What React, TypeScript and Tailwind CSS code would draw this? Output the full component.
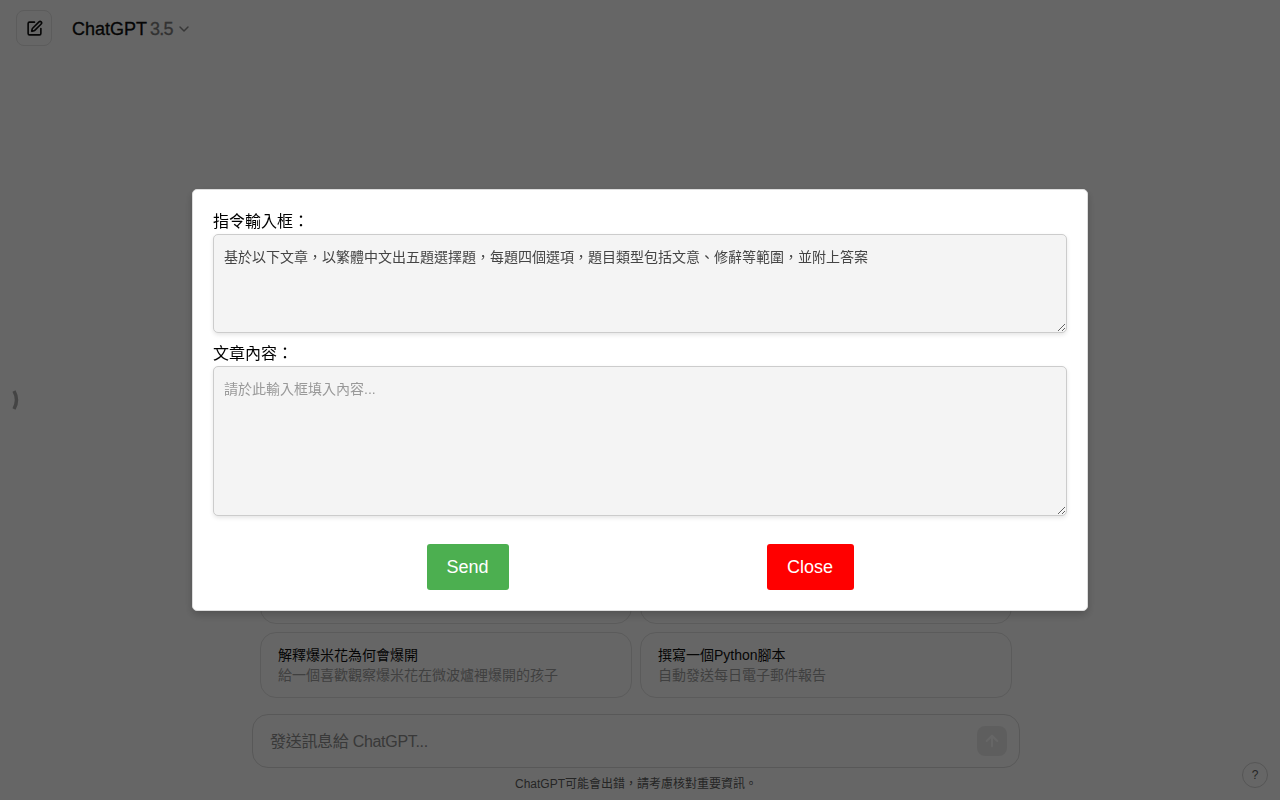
import { ArrowUp, ChevronDown, SquarePen } from "lucide-react";

const font = "font-['Liberation_Sans','Noto_Sans_CJK_TC',sans-serif]";

const promptText =
  "\u57FA\u65BC\u4EE5\u4E0B\u6587\u7AE0\uFF0C\u4EE5\u7E41\u9AD4\u4E2D\u6587\u51FA\u4E94\u984C\u9078\u64C7\u984C\uFF0C\u6BCF\u984C\u56DB\u500B\u9078\u9805\uFF0C\u984C\u76EE\u985E\u578B\u5305\u62EC\u6587\u610F\u3001\u4FEE\u8FAD\u7B49\u7BC4\u570D\uFF0C\u4E26\u9644\u4E0A\u7B54\u6848";
const footerText = "ChatGPT\u53EF\u80FD\u6703\u51FA\u932F\uFF0C\u8ACB\u8003\u616E\u6838\u5C0D\u91CD\u8981\u8CC7\u8A0A\u3002";

function Card({ title, sub }: { title?: string; sub?: string }) {
  return (
    <div className="h-[66px] rounded-2xl border border-[#e3e3e3] px-[17px] py-3 text-sm leading-5">
      {title && <div className="text-[#0d0d0d]">{title}</div>}
      {sub && <div className="text-[#a0a0a0]">{sub}</div>}
    </div>
  );
}

export default function App() {
  return (
    <div className={`${font} relative flex h-screen flex-col justify-between overflow-hidden bg-white`}>
      <header className="flex h-14 items-center pl-4">
        <button className="flex h-9 w-9 items-center justify-center rounded-lg border border-[#e5e5e5] text-[#0d0d0d]">
          <SquarePen size={17} strokeWidth={2.25} />
        </button>
        <div className="ml-5 flex items-center pt-0.5 text-lg text-[#0d0d0d]">
          <span className="[-webkit-text-stroke:0.3px_#0d0d0d]">ChatGPT</span>
          <span className="ml-[3px] tracking-[-0.8px] text-[#7d7d7d] [-webkit-text-stroke:0.3px_#7d7d7d]">3.5</span>
          <ChevronDown size={16} strokeWidth={2.25} className="ml-[3px] text-[#8a8a8a]" />
        </div>
      </header>

      <svg
        className="absolute left-[10px] top-[390px] text-[#aaa]"
        width="12"
        height="20"
        viewBox="0 0 12 20"
        fill="none"
        stroke="currentColor"
        strokeWidth="3.5"
      >
        <path d="M4 1 Q9 10 4 19" />
      </svg>

      <main className="flex flex-col items-center pr-2">
        <div className="grid w-[752px] grid-cols-2 gap-2">
          <Card />
          <Card />
          <Card title="解釋爆米花為何會爆開" sub="給一個喜歡觀察爆米花在微波爐裡爆開的孩子" />
          <Card title="撰寫一個Python腳本" sub="自動發送每日電子郵件報告" />
        </div>
        <div className="mt-4 flex h-[54px] w-[768px] items-center justify-between rounded-2xl border border-[#dcdcdc] pl-[17px] pr-[12px]">
          <span className="pt-0.5 text-base tracking-[-0.3px] text-[#8e8e8e]">發送訊息給 ChatGPT...</span>
          <span className="flex h-[30px] w-[30px] items-center justify-center rounded-lg bg-[#ececec] text-white">
            <ArrowUp size={18} strokeWidth={2.5} />
          </span>
        </div>
        <div className="flex h-8 items-center text-xs text-[#5d5d5d]">{footerText}</div>
      </main>

      <div className="absolute left-[1242px] top-[762px] flex h-[26px] w-[26px] items-center justify-center rounded-full border border-[#d5d5d5] text-xs text-[#5d5d5d]">
        ?
      </div>

      <div className="fixed inset-0 flex items-center justify-center bg-black/60">
        <div className="w-[896px] rounded-[5px] border border-[#ddd] bg-white px-5 pb-5 pt-5 shadow-[0_4px_8px_rgba(0,0,0,0.2)]">
          <label className="block h-6 text-base leading-6 text-black">{"\u6307\u4EE4\u8F38\u5165\u6846\uFF1A"}</label>
          <textarea
            readOnly
            className="block h-[99px] w-full rounded-[5px] border border-[#ccc] bg-[#f4f4f4] p-[10px] text-sm leading-6 text-[#444] shadow-[0_2px_4px_rgba(0,0,0,0.1)] outline-none"
            value={promptText}
          />
          <label className="mt-[9px] block h-6 text-base leading-6 text-black">{"\u6587\u7AE0\u5167\u5BB9\uFF1A"}</label>
          <textarea
            readOnly
            placeholder="請於此輸入框填入內容..."
            className="block h-[150px] w-full rounded-[5px] border border-[#ccc] bg-[#f4f4f4] p-[10px] text-sm leading-6 text-[#444] shadow-[0_2px_4px_rgba(0,0,0,0.1)] outline-none placeholder:text-[#999]"
          />
          <div className="mt-7 flex justify-center gap-[258px]">
            <button className="h-[46px] w-[82px] rounded-[3px] bg-[#4caf50] text-lg text-white">Send</button>
            <button className="h-[46px] w-[87px] rounded-[3px] bg-[#ff0000] text-lg text-white">Close</button>
          </div>
        </div>
      </div>
    </div>
  );
}
